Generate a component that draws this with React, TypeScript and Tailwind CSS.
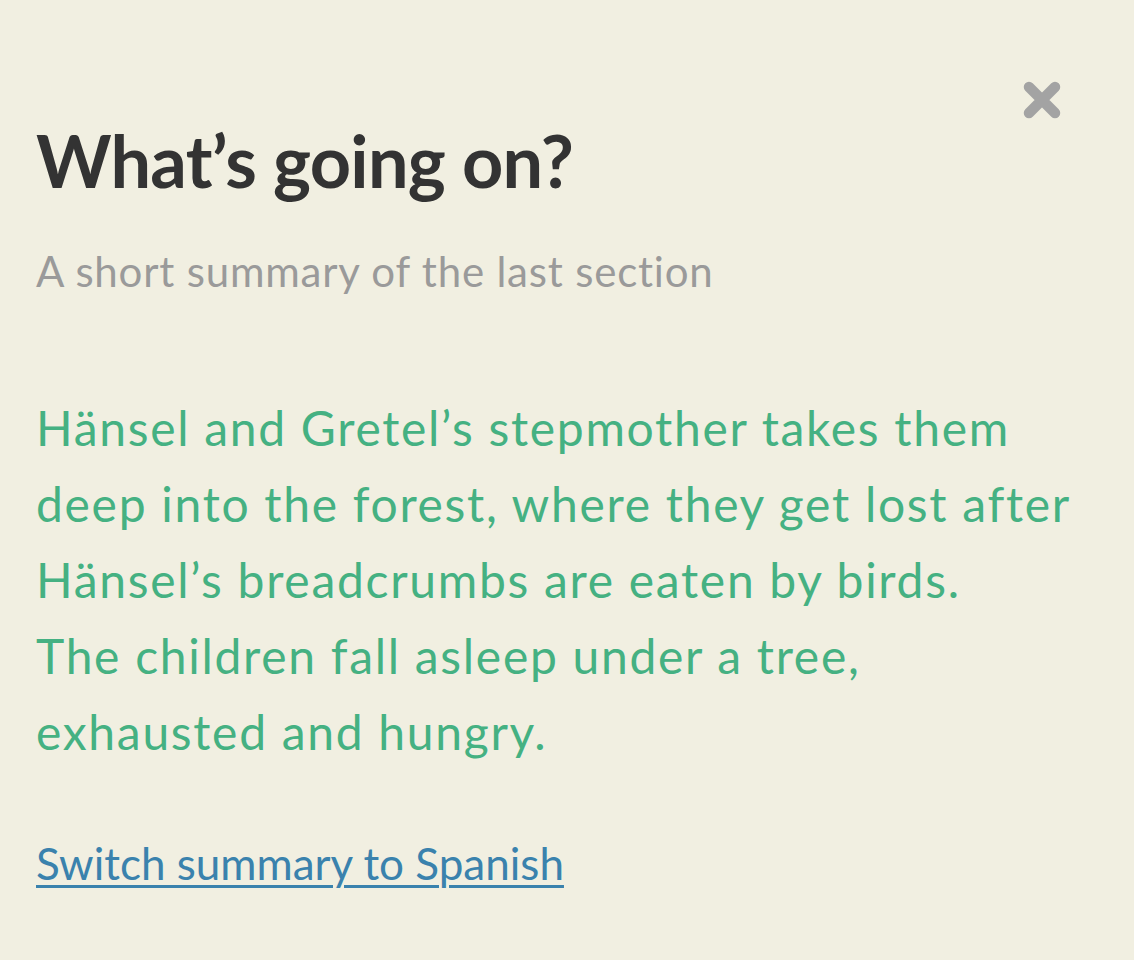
import React from 'react';

const CloseIcon: React.FC = () => (
  <svg width="40" height="40" viewBox="0 0 40 40" aria-hidden="true">
    <path d="M7 7 L33 33 M33 7 L7 33" stroke="#a3a3a3" strokeWidth="10.5" strokeLinecap="round" fill="none" />
  </svg>
);

const summaryLines = [
  'Hänsel and Gretel’s stepmother takes them',
  'deep into the forest, where they get lost after',
  'Hänsel’s breadcrumbs are eaten by birds.',
  'The children fall asleep under a tree,',
  'exhausted and hungry.',
];

const App: React.FC = () => {
  return (
    <div
      className="w-[1134px] h-[960px] bg-[#f1efe1] relative overflow-hidden"
      style={{ fontFamily: 'Lato, "Noto Sans", sans-serif' }}
    >
      <button className="absolute top-[80px] left-[1022px] w-[40px] h-[40px] flex items-center justify-center" title="Close">
        <CloseIcon />
      </button>

      <div className="px-[36px] pt-[121px]">
        <h1 className="text-[72px] leading-[1.1] font-bold text-[#333333] tracking-[-0.7px]">What’s going on?</h1>
        <p className="mt-[44px] text-[42px] leading-[1.3] tracking-[0.8px] text-[#9a9a9a]">A short summary of the last section</p>

        <p className="mt-[91px] text-[48px] leading-[76px] tracking-[1.7px] text-[#45b182]">
          {summaryLines.map((line) => (
            <span key={line} className="block whitespace-nowrap">
              {line}
            </span>
          ))}
        </p>

        <a href="#" className="inline-block mt-[67px] text-[44px] leading-[1.2] text-[#3a82ad] underline underline-offset-[5px] decoration-[3px]">
          Switch summary to Spanish
        </a>
      </div>
    </div>
  );
};

export default App;
